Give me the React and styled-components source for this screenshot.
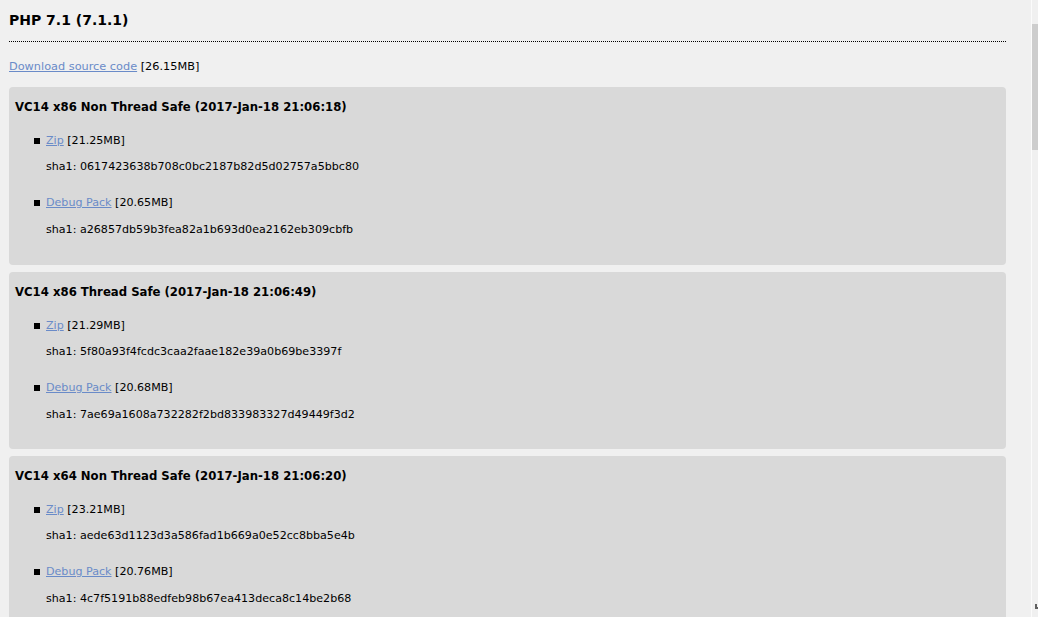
import React from "react";
import styled, { createGlobalStyle } from "styled-components";

const Global = createGlobalStyle`
  html, body { margin: 0; padding: 0; background: #f0f0f0; }
  body { font-family: "DejaVu Sans", Verdana, sans-serif; font-size: 11.1px; color: #000; }
  #root { height: 617px; overflow: hidden; }
`;

const Page = styled.div`
  display: flex;
  height: 617px;
  overflow: hidden;
`;

const Main = styled.main`
  flex: 1;
  padding: 0 25px 0 9px;
  min-width: 0;
`;

const Heading = styled.h2`
  margin: 12px 0 0;
  padding-bottom: 12px;
  font-size: 14px;
  line-height: 17px;
  font-weight: bold;
  border-bottom: 1px dotted #000;
`;

const SourceLine = styled.p`
  margin: 18px 0 0;
  line-height: 14px;
  font-size: 11.3px;
`;

const Link = styled.a`
  color: #6a8bc8;
  text-decoration: underline;
  cursor: pointer;
`;

const Build = styled.section`
  background: #d9d9d9;
  border-radius: 4px;
  height: 177.5px;
  box-sizing: border-box;
  padding: 13px 6px 0;
  margin-top: ${(p) => (p.$first ? "13px" : "7px")};
`;

const BuildTitle = styled.h3`
  margin: 0;
  font-size: 11.7px;
  line-height: 14px;
  font-weight: bold;
`;

const FileList = styled.ul`
  list-style: none;
  margin: 20px 0 0;
  padding: 0 0 0 19px;
`;

const FileItem = styled.li`
  & + & { margin-top: 22px; }
`;

const FileLine = styled.div`
  display: flex;
  align-items: center;
  line-height: 14px;
`;

const Bullet = styled.span`
  width: 6px;
  height: 6px;
  background: #000;
  margin-right: 6px;
  flex: none;
`;

const Sha = styled.div`
  line-height: 14px;
  padding-left: 12px;
  margin-top: ${(p) => (p.$last ? "13px" : "12px")};
`;

const Scrollbar = styled.div`
  position: relative;
  width: 6px;
  border-left: 1px solid #fbfbfb;
  background: #f0f0f0;
  flex: none;
`;

const Thumb = styled.div`
  margin-top: 24px;
  height: 126px;
  background: #cdcdcd;
`;

const Arrow = styled.svg`
  position: absolute;
  left: 3px;
  top: 604px;
`;

const builds = [
  {
    title: "VC14 x86 Non Thread Safe (2017-Jan-18 21:06:18)",
    files: [
      { name: "Zip", size: "21.25MB", sha: "0617423638b708c0bc2187b82d5d02757a5bbc80" },
      { name: "Debug Pack", size: "20.65MB", sha: "a26857db59b3fea82a1b693d0ea2162eb309cbfb" },
    ],
  },
  {
    title: "VC14 x86 Thread Safe (2017-Jan-18 21:06:49)",
    files: [
      { name: "Zip", size: "21.29MB", sha: "5f80a93f4fcdc3caa2faae182e39a0b69be3397f" },
      { name: "Debug Pack", size: "20.68MB", sha: "7ae69a1608a732282f2bd833983327d49449f3d2" },
    ],
  },
  {
    title: "VC14 x64 Non Thread Safe (2017-Jan-18 21:06:20)",
    files: [
      { name: "Zip", size: "23.21MB", sha: "aede63d1123d3a586fad1b669a0e52cc8bba5e4b" },
      { name: "Debug Pack", size: "20.76MB", sha: "4c7f5191b88edfeb98b67ea413deca8c14be2b68" },
    ],
  },
];

export default function App() {
  return (
    <>
      <Global />
      <Page>
        <Main>
          <Heading>PHP 7.1 (7.1.1)</Heading>
          <SourceLine>
            <Link>Download source code</Link> [26.15MB]
          </SourceLine>
          {builds.map((b, i) => (
            <Build key={b.title} $first={i === 0}>
              <BuildTitle>{b.title}</BuildTitle>
              <FileList>
                {b.files.map((f, j) => (
                  <FileItem key={f.name}>
                    <FileLine>
                      <Bullet />
                      <span>
                        <Link>{f.name}</Link>&nbsp;[{f.size}]
                      </span>
                    </FileLine>
                    <Sha $last={j === 1}>sha1: {f.sha}</Sha>
                  </FileItem>
                ))}
              </FileList>
            </Build>
          ))}
        </Main>
        <Scrollbar>
          <Thumb />
          <Arrow width="5" height="6" viewBox="0 0 5 6">
            <polygon points="0,0 2,0 2,3 4,3 4,5 0,5" fill="#606060" />
          </Arrow>
        </Scrollbar>
      </Page>
    </>
  );
}
